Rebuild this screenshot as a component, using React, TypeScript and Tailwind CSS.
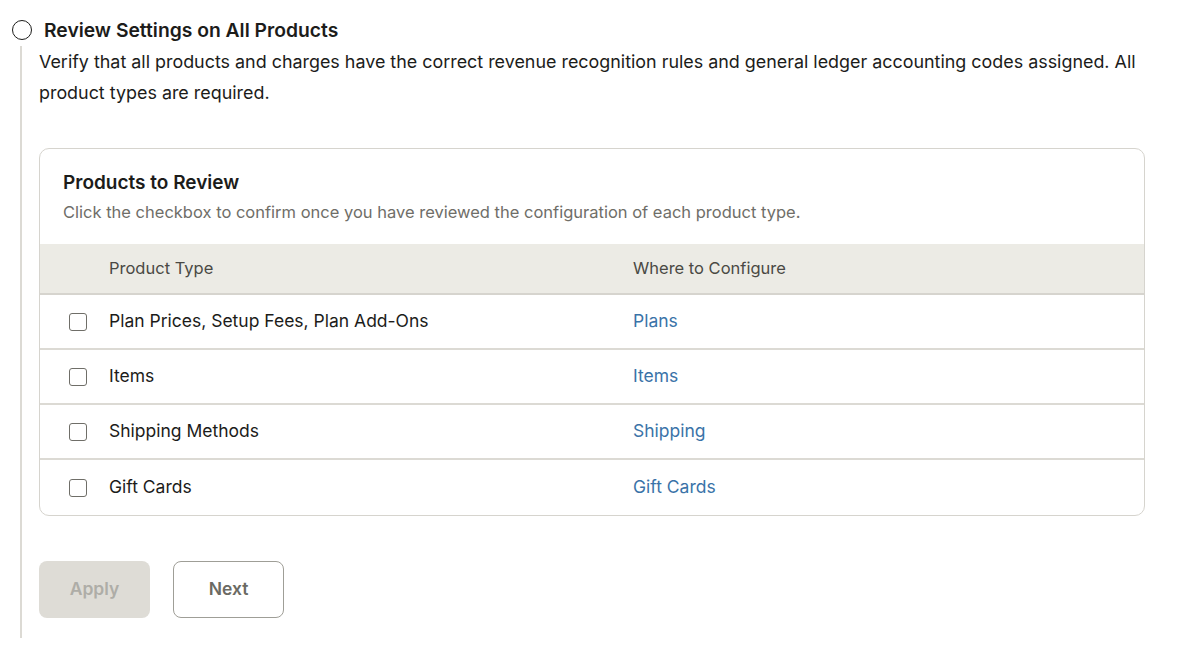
const rows = [
  { type: "Plan Prices, Setup Fees, Plan Add-Ons", where: "Plans" },
  { type: "Items", where: "Items" },
  { type: "Shipping Methods", where: "Shipping" },
  { type: "Gift Cards", where: "Gift Cards" },
];

export default function App() {
  return (
    <div className="min-h-[658px] bg-white font-['Inter',sans-serif] text-[#1c1c1a]">
      <div className="flex items-center gap-[12px] pl-[12px] pt-[19px]">
        <span className="h-[20px] w-[20px] rounded-full border-[1.5px] border-[#1c1c1a]" />
        <h2 className="text-[19.3px] font-semibold leading-[22px]">Review Settings on All Products</h2>
      </div>
      <div className="ml-[20px] mt-[5px] w-[1125px] border-l-2 border-[#dcdad4] pb-[20px] pl-[17px]">
        <p className="text-[17.9px] leading-[31px]">
          Verify that all products and charges have the correct revenue recognition rules and general ledger
          accounting codes assigned. All product types are required.
        </p>
        <div className="mt-[40px] overflow-hidden rounded-[10px] border border-[#d6d4ce]">
          <div className="px-[23px] pb-[22px] pt-[22px]">
            <h3 className="text-[19px] font-semibold leading-[23px]">Products to Review</h3>
            <p className="mt-[8px] text-[16.5px] leading-[20px] text-[#6f6e68]">
              Click the checkbox to confirm once you have reviewed the configuration of each product type.
            </p>
          </div>
          <div className="flex h-[51px] items-center border-b-2 border-[#d6d4ce] bg-[#ecebe5] text-[16.5px] text-[#4a4944]">
            <span className="w-[593px] pl-[69px]">Product Type</span>
            <span>Where to Configure</span>
          </div>
          {rows.map((r, i) => (
            <div
              key={r.type}
              className={`flex h-[55px] items-center text-[17.5px] ${i < rows.length - 1 ? "border-b-2 border-[#dcdad4]" : ""}`}
            >
              <span className="ml-[29px] h-[18px] w-[18px] rounded-[3px] border-[1.5px] border-[#6f6e68]" />
              <span className="ml-[22px] w-[524px]">{r.type}</span>
              <a className="text-[#3a73a8]">{r.where}</a>
            </div>
          ))}
        </div>
        <div className="mt-[45px] flex gap-[23px]">
          <button className="h-[57px] w-[111px] rounded-[8px] bg-[#dedcd6] text-[17.5px] font-semibold text-[#aeada7]">
            Apply
          </button>
          <button className="h-[57px] w-[111px] rounded-[8px] border border-[#9f9e97] text-[17.5px] font-semibold text-[#6b6a63]">
            Next
          </button>
        </div>
      </div>
    </div>
  );
}
